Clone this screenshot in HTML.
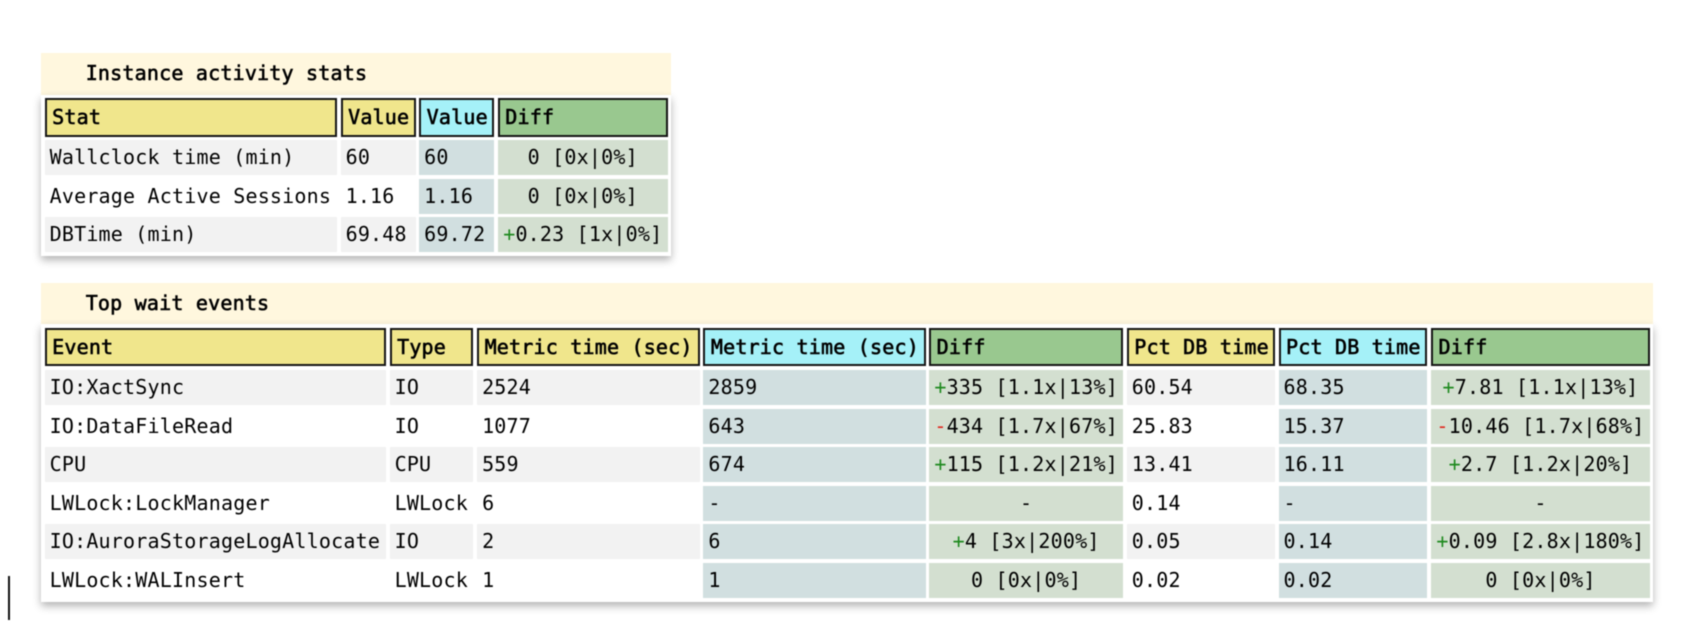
<!DOCTYPE html>
<html>
<head>
<meta charset="utf-8">
<title>Report</title>
<style>
html,body{margin:0;padding:0;background:#fff;width:1692px;height:634px;overflow:hidden}
#wrap{position:relative;width:1692px;height:634px;filter:blur(.4px)}
.box{position:absolute;left:41px}
.cap{height:41.5px;background:#fff7de;box-sizing:border-box;padding-left:44.7px;line-height:41.5px;-webkit-text-stroke:.6px #000}
.box,table{font-family:"DejaVu Sans Mono","Liberation Mono",monospace;font-size:20px;letter-spacing:.2px;color:#000}
table{display:grid;gap:3.6px;padding:3.6px;box-sizing:border-box;background:#fff;box-shadow:0 4px 8px rgba(0,0,0,.3)}
tbody,tr{display:contents}
th{box-sizing:border-box;display:block;height:38.6px;line-height:34.6px;border:2px solid #151515;background:#f0e68c;text-align:left;padding:0 0 0 5.5px;font-weight:normal;-webkit-text-stroke:.6px #000;white-space:nowrap;overflow:hidden}
th.c{background:#a5f1f8}
th.g{background:#99c88f}
td{box-sizing:border-box;display:block;height:35px;line-height:35px;padding:0 0 0 5px;white-space:nowrap;overflow:hidden;background:#fff}
tr.o td{background:#f2f2f2}
td.c,tr.o td.c{background:#d1dfe0}
td.g,tr.o td.g{background:#d3dfd0;text-align:center;padding:0}
.p{color:#1f8a1f}
.m{color:#e0261c}
#bar{position:absolute;left:8px;top:576px;width:1.5px;height:44px;background:#111}
</style>
</head>
<body>
<div id="wrap">
<div class="box" style="top:53px;width:630px">
<div class="cap">Instance activity stats</div>
<table style="width:630px;grid-template-columns:292.4px 75px 75px 170px">
<tr><th>Stat</th><th>Value</th><th class="c">Value</th><th class="g">Diff</th></tr>
<tr class="o"><td>Wallclock time (min)</td><td>60</td><td class="c">60</td><td class="g">0 [0x|0%]</td></tr>
<tr><td>Average Active Sessions</td><td>1.16</td><td class="c">1.16</td><td class="g">0 [0x|0%]</td></tr>
<tr class="o"><td>DBTime (min)</td><td>69.48</td><td class="c">69.72</td><td class="g"><span class="p">+</span>0.23 [1x|0%]</td></tr>
</table>
</div>
<div class="box" style="top:282.7px;width:1612px">
<div class="cap">Top wait events</div>
<table style="width:1612px;grid-template-columns:341.4px 83.9px 222.7px 222.2px 194px 148.2px 148.9px 219px">
<tr><th>Event</th><th>Type</th><th>Metric time (sec)</th><th class="c">Metric time (sec)</th><th class="g">Diff</th><th>Pct DB time</th><th class="c">Pct DB time</th><th class="g">Diff</th></tr>
<tr class="o"><td>IO:XactSync</td><td>IO</td><td>2524</td><td class="c">2859</td><td class="g"><span class="p">+</span>335 [1.1x|13%]</td><td>60.54</td><td class="c">68.35</td><td class="g"><span class="p">+</span>7.81 [1.1x|13%]</td></tr>
<tr><td>IO:DataFileRead</td><td>IO</td><td>1077</td><td class="c">643</td><td class="g"><span class="m">-</span>434 [1.7x|67%]</td><td>25.83</td><td class="c">15.37</td><td class="g"><span class="m">-</span>10.46 [1.7x|68%]</td></tr>
<tr class="o"><td>CPU</td><td>CPU</td><td>559</td><td class="c">674</td><td class="g"><span class="p">+</span>115 [1.2x|21%]</td><td>13.41</td><td class="c">16.11</td><td class="g"><span class="p">+</span>2.7 [1.2x|20%]</td></tr>
<tr><td>LWLock:LockManager</td><td>LWLock</td><td>6</td><td class="c">-</td><td class="g">-</td><td>0.14</td><td class="c">-</td><td class="g">-</td></tr>
<tr class="o"><td>IO:AuroraStorageLogAllocate</td><td>IO</td><td>2</td><td class="c">6</td><td class="g"><span class="p">+</span>4 [3x|200%]</td><td>0.05</td><td class="c">0.14</td><td class="g"><span class="p">+</span>0.09 [2.8x|180%]</td></tr>
<tr><td>LWLock:WALInsert</td><td>LWLock</td><td>1</td><td class="c">1</td><td class="g">0 [0x|0%]</td><td>0.02</td><td class="c">0.02</td><td class="g">0 [0x|0%]</td></tr>
</table>
</div>
<div id="bar"></div>
</div>
</body>
</html>
